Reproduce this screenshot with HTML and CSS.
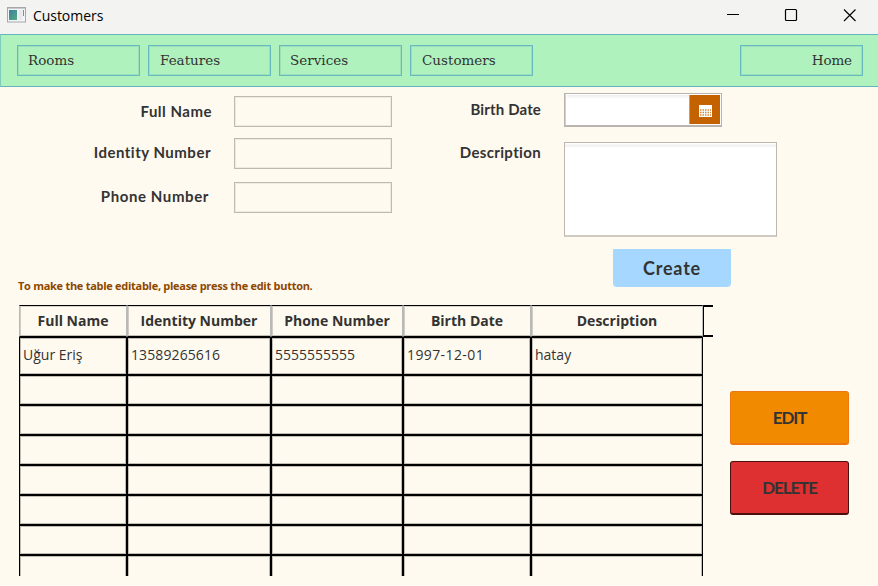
FILE: index.html
```html
<!DOCTYPE html>
<html lang="en">
<head>
<meta charset="utf-8">
<title>Customers</title>
<link rel="stylesheet" href="styles.css">
</head>
<body>
<div class="window">
  <header class="titlebar">
    <svg class="app-icon" width="19" height="16" viewBox="0 0 19 16">
      <defs><linearGradient id="g" x1="0" y1="0" x2="1" y2="1"><stop offset="0" stop-color="#3c7fa3"/><stop offset="1" stop-color="#54ad79"/></linearGradient></defs>
      <rect x=".5" y=".5" width="18" height="14.5" fill="#f4f5f7" stroke="#a4a7ac"/>
      <path d="M1 1.5h17" stroke="#c6c9ce"/>
      <rect x="2" y="3" width="8" height="10" fill="url(#g)"/>
      <rect x="11.5" y="3" width="4" height="10" fill="#e6e9ed"/>
      <path d="M16.5 3v6" stroke="#54a58a"/>
    </svg>
    <span class="app-title">Customers</span>
    <svg class="controls" width="132" height="14" viewBox="0 0 132 14" fill="none" stroke="#000">
      <path d="M0 6.5h12"/>
      <rect x="58.5" y="1.5" width="11" height="11" rx="1" stroke-width="1.2"/>
      <path d="M117 1.5l11.500 11.500M128.500 1.500L117 13" stroke-width="1.1"/>
    </svg>
  </header>
  <nav class="nav">
    <button class="nav-item rooms">Rooms</button>
    <button class="nav-item features">Features</button>
    <button class="nav-item services">Services</button>
    <button class="nav-item customers">Customers</button>
    <button class="nav-item home">Home</button>
  </nav>
  <main class="content">
    <section class="form">
      <div class="left-fields">
        <label class="row"><span class="label full">Full Name</span><input class="field"></label>
        <label class="row"><span class="label identity">Identity Number</span><input class="field"></label>
        <label class="row phone-row"><span class="label phone">Phone Number</span><input class="field"></label>
      </div>
      <div class="right-fields">
        <div class="row date-row"><span class="label birth">Birth Date</span>
          <div class="date-picker"><input class="date-input"><button class="date-button" aria-label="Choose date">
            <svg width="13" height="12" viewBox="0 0 13 12"><path fill="#fff" d="M0 0h13v12H0z"/><path d="M1 5h11M1 7.500h11M1 10h11" stroke="#c46200" stroke-width="1.300" stroke-dasharray="1.500 1" opacity=".75"/></svg>
          </button></div>
        </div>
        <div class="row desc-row"><span class="label desc">Description</span><textarea class="area"></textarea></div>
        <button class="create">Create</button>
      </div>
    </section>
    <p class="hint">To make the table editable, please press the edit button.</p>
    <section class="lower">
      <div class="table">
        <div class="head"><div>Full Name</div><div>Identity Number</div><div>Phone Number</div><div>Birth Date</div><div>Description</div><i class="filler"></i></div>
        <div class="tr first"><div>Uğur Eriş</div><div class="identity-value">13589265616</div><div>5555555555</div><div class="date-value">1997-12-01</div><div>hatay</div></div>
        <div class="tr"><div></div><div></div><div></div><div></div><div></div></div>
        <div class="tr"><div></div><div></div><div></div><div></div><div></div></div>
        <div class="tr"><div></div><div></div><div></div><div></div><div></div></div>
        <div class="tr"><div></div><div></div><div></div><div></div><div></div></div>
        <div class="tr"><div></div><div></div><div></div><div></div><div></div></div>
        <div class="tr"><div></div><div></div><div></div><div></div><div></div></div>
        <div class="tr last"><div></div><div></div><div></div><div></div><div></div></div>
      </div>
      <div class="actions"><button class="edit"><span>EDIT</span></button><button class="delete"><span>DELETE</span></button></div>
    </section>
  </main>
</div>
</body>
</html>
```
FILE: styles.css
```css
* { box-sizing: border-box; }
body { margin: 0; background: #fffaef; color: #333; overflow: hidden; }
button, input, textarea { font: inherit; color: inherit; margin: 0; padding: 0; border-radius: 0; outline: 0; resize: none; }
.window { width: 878px; height: 586px; overflow: hidden; display: flex; flex-direction: column; }
.titlebar { height: 34px; background: #f3f3f1; display: flex; align-items: flex-start; padding: 7px 19px 0 7px; color: #000; }
.app-title { font: 14px/18px "Open Sans", sans-serif; margin-left: 7px; letter-spacing: -.05px; }
.controls { margin-left: auto; margin-top: 1px; }
.nav { height: 53px; flex: none; display: flex; gap: 8px; padding: 10px 15px 0 15px; background: #aff2bd; border: 1px solid #64b4bd; border-right: 0; border-left-color: #7fcbbd; }
.nav-item { width: 123px; height: 31px; border: 1px solid #68b9be; box-shadow: inset 0 0 0 1px #9be0bd; background: none; text-align: left; padding: 0 10px; font: 13.5px/29px "DejaVu Serif", serif; position: relative; left: 1px; }
.features, .customers { padding-left: 11px; }
.home { margin-left: auto; text-align: right; left: 0; letter-spacing: -.1px; }
.content { flex: 1; display: flex; flex-direction: column; }
.form { display: flex; height: 200px; flex: none; }
.left-fields { width: 392px; padding-top: 9px; display: flex; flex-direction: column; gap: 12px; }
.right-fields { width: 385px; padding-top: 6px; display: flex; flex-direction: column; }
.row { display: flex; }
.left-fields .row { height: 30px; }
.left-fields .phone-row { margin-top: 2px; }
.label { text-align: right; font: bold 15px/30px Lato, sans-serif; white-space: nowrap; letter-spacing: .5px; }
.left-fields .label { width: 234px; padding-right: 22px; }
.left-fields .identity { padding-right: 23px; line-height: 29px; }
.left-fields .phone { padding-right: 25px; line-height: 29px; letter-spacing: .6px; }
.right-fields .label { width: 172px; padding-right: 23px; }
.field { width: 158px; height: 31px; border: 1px solid #bfbab0; background: transparent; box-shadow: inset 0 0 0 1px #f0ebe0; }
.date-row { height: 34px; }
.right-fields .birth { line-height: 33px; letter-spacing: .15px; }
.date-picker { width: 158px; height: 34px; border: 1px solid #bab4b0; border-bottom-width: 2px; box-shadow: inset 1px 0 #d3cecb; background: #fff; display: flex; padding: 1px 1px 1px 2px; }
.date-input { flex: 1; min-width: 0; border: 0; background: linear-gradient(#eee, #fff 4px); }
.date-button { width: 31px; background: #c46200; border: 0; border-left: 1px solid #d89a65; display: flex; align-items: center; justify-content: center; padding-top: 2px; }
.desc-row { margin-top: 15px; height: 95px; }
.right-fields .desc { line-height: 21px; letter-spacing: .35px; }
.area { width: 213px; height: 95px; border: 1px solid #bfb7ad; border-bottom: 2px solid #d0cac2; background: linear-gradient(#fff 1px, #eee 2px, #fff 5px); display: block; }
.create { flex: none; align-self: flex-start; margin: 12px 0 0 221px; width: 118px; height: 38px; border: 0; border-radius: 0 0 4px 4px; background: #a6d8ff; font: bold 18px/36px Lato, sans-serif; letter-spacing: .8px; padding-bottom: 1px; }
.hint { margin: -9px 0 0 18px; height: 27px; font: bold 11px/16px "Open Sans", sans-serif; color: #8d4800; white-space: nowrap; letter-spacing: -.28px; }
.lower { display: flex; padding-left: 19px; }
.table { width: 694px; flex: none; }
.head, .tr { display: grid; grid-template-columns: 108px 144px 132px 128px 172px 10px; }
.head { height: 32px; }
.head div { border: 1px solid #b9b9b9; border-top-color: #000; border-bottom-color: #000; box-shadow: inset 0 1px #d9d5cd, inset 0 -1px #c0bdb7, inset 1px 0 #d0ccc5; display: flex; align-items: center; justify-content: center; font: bold 14px/18px "Open Sans", sans-serif; white-space: nowrap; }
.filler { height: 32px; border: 2px solid #000; border-left-width: 1px; border-right: 0; }
.tr { height: 30px; }
.tr div { border: 1px solid #000; box-shadow: inset 0 0 0 1px #c1bdb6; }
.tr.first { height: 38px; }
.first div { font: 14px/34px "Open Sans", sans-serif; padding-left: 3px; }
.first .date-value { letter-spacing: .4px; }
.first .identity-value { letter-spacing: .1px; }
.tr.last { height: 21px; }
.last div { border-bottom: 0; box-shadow: inset 1px 1px #c1bdb6, inset -1px 0 #c1bdb6; }
.actions { padding: 86px 0 0 17px; display: flex; flex-direction: column; gap: 16px; }
.actions button { width: 119px; height: 54px; border-radius: 3px; font: bold 17px/50px Lato, sans-serif; }
.edit { background: #f28a00; border: 1px solid #ee7610; border-bottom-width: 2px; }
.delete { background: #de3030; border: 1px solid #4a1010; border-bottom-width: 2px; }
.actions span { letter-spacing: -1.1px; }
```
